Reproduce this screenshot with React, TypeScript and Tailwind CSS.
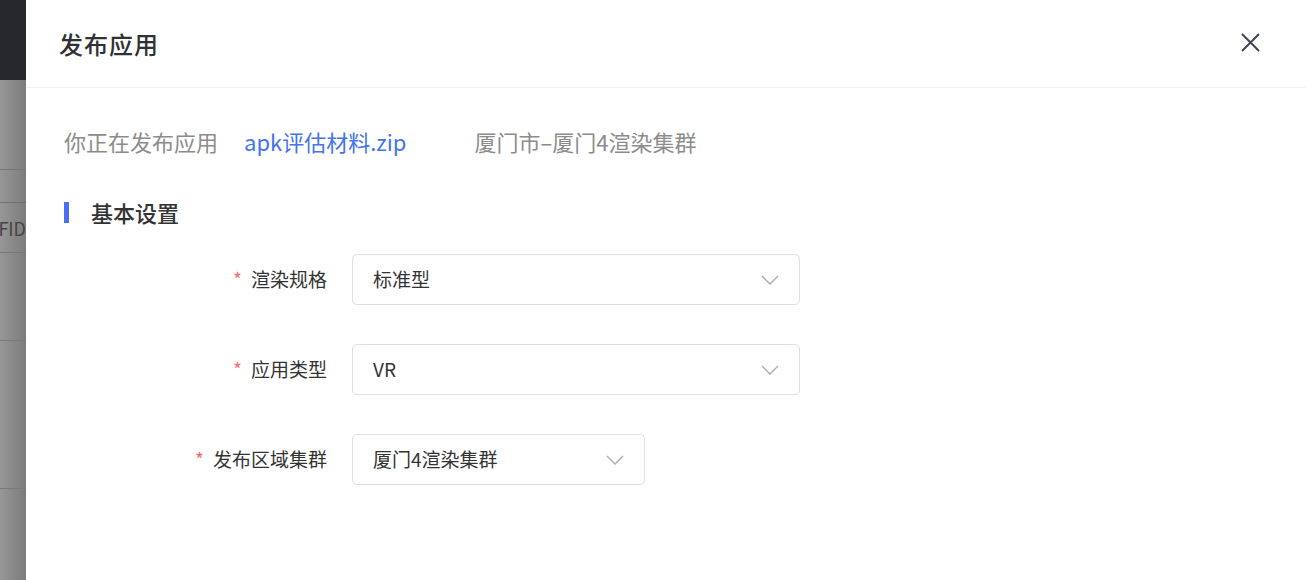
const font = { fontFamily: '"PingFang SC", "Noto Sans CJK SC", "Noto Sans", sans-serif' };

function Chevron() {
  return (
    <svg width="18" height="10" viewBox="0 0 18 10" fill="none">
      <polyline points="1,1 9,9 17,1" stroke="#a8abb2" strokeWidth="1.3" />
    </svg>
  );
}

function SelectRow({ label, value, width }: { label: string; value: string; width: string }) {
  return (
    <div className="flex items-center">
      <div className="w-[288px] pr-[25px] flex justify-end items-center text-[19px] text-[#333]">
        <span className="text-[#f56c6c] mr-[9px]">*</span>
        <span>{label}</span>
      </div>
      <div
        className={`${width} h-[51px] border border-[#dcdfe6] rounded-[5px] bg-white flex items-center justify-between pl-[20px] pr-[20px] text-[19px] text-[#333]`}
      >
        <span>{value}</span>
        <Chevron />
      </div>
    </div>
  );
}

export default function App() {
  return (
    <div className="flex w-[1306px] h-[580px] overflow-hidden bg-white" style={font}>
      {/* page behind the drawer */}
      <div className="w-[26px] shrink-0 flex flex-col">
        <div className="h-[80px] bg-[#26282e]" />
        <div className="flex-1 bg-gradient-to-r from-[#979797] to-[#7c7c7c] flex flex-col">
          <div className="h-[90px] border-b border-[#777]" />
          <div className="h-[33px] border-b border-[#6f6f6f]" />
          <div className="h-[50px] border-b border-[#777] flex items-center justify-end overflow-hidden text-[18px] text-[#444] leading-none">
            <span className="shrink-0">FID</span>
          </div>
          <div className="h-[88px] border-b border-[#7a7a7a]" />
          <div className="h-[148px] border-b border-[#7a7a7a]" />
        </div>
      </div>

      {/* drawer */}
      <div className="flex-1 flex flex-col">
        <div className="h-[88px] border-b border-[#f2f2f2] flex items-center justify-between pl-[33px] pr-[46px]">
          <h1 className="text-[24px] font-medium text-[#303133] tracking-[1px]">发布应用</h1>
          <svg width="19" height="19" viewBox="0 0 19 19" fill="none" className="mt-[-2px]">
            <path d="M1 1 L18 18 M18 1 L1 18" stroke="#3d4354" strokeWidth="1.9" />
          </svg>
        </div>

        <div className="pl-[38px] pt-[38px]">
          <div className="flex items-center h-[30px] text-[22px]">
            <span className="text-[#8c8c8c]">你正在发布应用</span>
            <span className="ml-[26px] text-[#4472f0]">apk评估材料.zip</span>
            <span className="ml-[68px] text-[#8c8c8c]">厦门市–厦门4渲染集群</span>
          </div>

          <div className="flex items-center mt-[41px] h-[30px]">
            <div className="w-[5px] h-[21px] bg-[#4a6ff5]" />
            <span className="ml-[22px] text-[22px] font-medium text-[#333]">基本设置</span>
          </div>

          <div className="mt-[27px] flex flex-col gap-[39px]">
            <SelectRow label="渲染规格" value="标准型" width="w-[448px]" />
            <SelectRow label="应用类型" value="VR" width="w-[448px]" />
            <SelectRow label="发布区域集群" value="厦门4渲染集群" width="w-[293px]" />
          </div>
        </div>
      </div>
    </div>
  );
}
